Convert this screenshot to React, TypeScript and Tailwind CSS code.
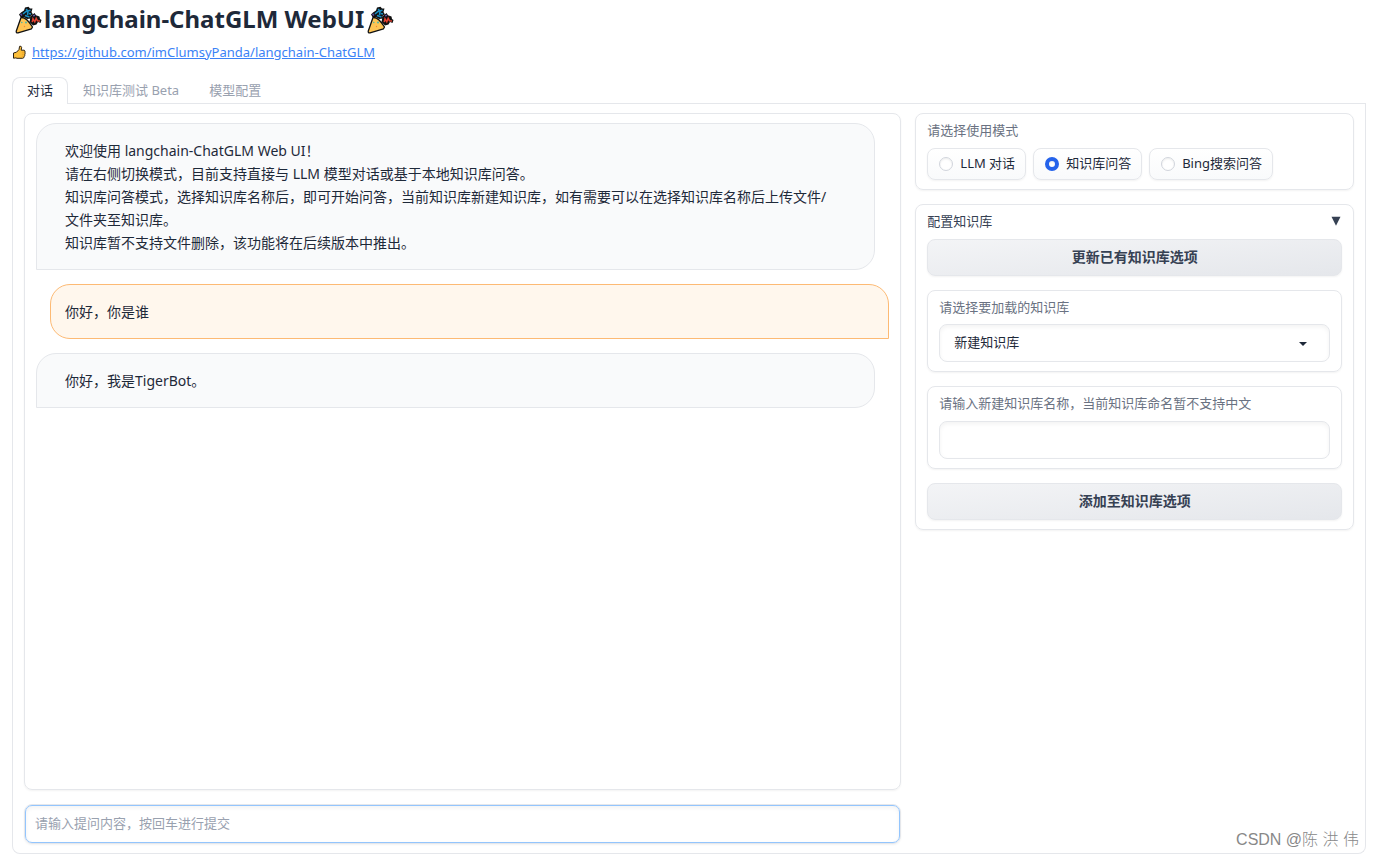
import { useId, useState } from "react";
import type { ReactNode } from "react";

function PartyPopper() {
  return (
    <svg viewBox="0 0 28 28" className="h-7 w-7 shrink-0" aria-hidden="true">
      <path d="M7 6.5 L10 4.5 L11 1.5 L14.5 0.8 L16 2.5 L18.5 2.5 L17.5 6 L19 8.5 L16.5 10 L17 12.5 L13 13 L10 11 L6.500 11 L5 8.5 Z" fill="#111" />
      <path d="M9 8 L12 5.5 L16.5 4.2 M12.3 2.8 L14 6 L13.5 9 M11 9.5 L15.5 11 M15 7.5 L17 8" stroke="#1a8fc4" strokeWidth="1.6" fill="none" />
      <path d="M6.5 7.8 L8 9.5" stroke="#5b4fa0" strokeWidth="1.6" />
      <path d="M16.5 10.5 L20.5 7 L22 9.2 L25.500 10.5 L26 13 L27.5 14 L26.500 17 L24 16 L22.5 18.5 L19 19.5 L15.500 16 Z" fill="#111" />
      <path d="M18.2 16.2 L19 12.8 L20.8 15.8 L22.2 12.3 L23.5 14.8 L26 15" stroke="#e0402f" strokeWidth="1.5" fill="none" />
      <path d="M19.3 10.2 L20.8 9" stroke="#6a5bb5" strokeWidth="1.6" />
      <path d="M7 11.500 Q12.5 11 18.500 21 L17.5 22.8 L4 26.800 Q1.8 27.2 2.3 25 Z" fill="#ffc554" stroke="#111" strokeWidth="1.3" strokeLinejoin="round" />
      <circle cx="12" cy="16.5" r="0.9" fill="#35b6b8" />
      <circle cx="7.8" cy="16.5" r="0.7" fill="#35b6b8" />
      <circle cx="10.5" cy="20.5" r="0.7" fill="#ef8a3d" />
    </svg>
  );
}

function ThumbsUp() {
  return (
    <svg viewBox="0 0 14 14" className="h-3.5 w-3.5 shrink-0" aria-hidden="true">
      <path
        d="M1.5 8 L4.5 7.200 L7 4.500 L7.6 1.3 Q9.3 0.7 9.6 2.3 L9.2 5.2 L12.2 5.2 Q13.5 5.800 12.9 7.1 Q13.5 8.3 12.8 9.2 Q13.1 10.5 12.3 11.3 Q12.3 13 10.6 13.3 L5 13.3 L3.8 12.9 L1.5 13.2 Z"
        fill="#fdbf3a"
        stroke="#2b2113"
        strokeWidth="1"
        strokeLinejoin="round"
      />
      <path d="M9.8 7.2 H12.3 M9.8 9.2 H12.3 M9.8 11.2 H12" stroke="#d98a12" strokeWidth="0.5" />
    </svg>
  );
}

const tabs = ["对话", "知识库测试 Beta", "模型配置"];
const modes = ["LLM 对话", "知识库问答", "Bing搜索问答"];

function BotMessage({ children }: { children: ReactNode }) {
  return (
    <div className="mr-3.5 rounded-[20px] rounded-bl-none border border-gray-200 bg-gray-50 py-[15px] pr-10 pl-7">
      {children}
    </div>
  );
}

function UserMessage({ children }: { children: ReactNode }) {
  return (
    <div className="ml-3.5 rounded-[20px] rounded-br-none border border-[#fdba74] bg-[#fff7ed] px-3.5 py-[15px]">
      {children}
    </div>
  );
}

function SecondaryButton({ children }: { children: ReactNode }) {
  return (
    <button
      type="button"
      className="h-[37px] w-full rounded-lg border border-gray-200 bg-linear-to-br from-gray-100 to-gray-200 pb-0.5 text-sm font-bold text-gray-700 shadow-xs"
    >
      {children}
    </button>
  );
}

export default function App() {
  const [tab, setTab] = useState(0);
  const [mode, setMode] = useState(1);
  const [open, setOpen] = useState(true);
  const id = useId();

  return (
    <div className="relative min-h-[857px] bg-white pr-2 pb-1 pl-3 font-['Noto_Sans','Noto_Sans_CJK_SC',sans-serif] text-[13px] leading-5 text-gray-800">
      <header>
        <h1 className="flex h-10 items-center pl-0.5 text-2xl leading-10 font-bold">
          <PartyPopper />
          <span className="px-0.5 pb-0.5">langchain-ChatGLM WebUI</span>
          <PartyPopper />
        </h1>
        <p className="flex h-6 items-center gap-1.5">
          <ThumbsUp />
          <a href="https://github.com/imClumsyPanda/langchain-ChatGLM" className="text-[#3b82f6] underline">
            https://github.com/imClumsyPanda/langchain-ChatGLM
          </a>
        </p>
      </header>

      <main className="mt-[13px]">
        <div role="tablist" className="flex h-[27px] border-b border-gray-200">
          {tabs.map((name, i) => (
            <button
              key={name}
              type="button"
              role="tab"
              aria-selected={tab === i}
              onClick={() => setTab(i)}
              className={
                tab === i
                  ? "-mb-px rounded-t-lg border border-b-0 border-gray-200 bg-white px-3.5 pb-0.5 text-gray-800"
                  : "border border-b-0 border-transparent px-3.5 pb-0.5 text-gray-400"
              }
            >
              {name}
            </button>
          ))}
        </div>

        <div className="grid grid-cols-[2fr_1fr] gap-3.5 rounded-b-lg border border-t-0 border-gray-200 px-[11px] pt-[9px] pb-[9px]">
          <section className="flex flex-col gap-3.5">
            <div className="flex h-[677px] flex-col gap-3.5 overflow-y-auto rounded-lg border border-gray-200 px-[11px] py-[9px] text-sm leading-[23px] shadow-xs">
              <BotMessage>
                <p>欢迎使用 langchain-ChatGLM Web UI！</p>
                <p>请在右侧切换模式，目前支持直接与 LLM 模型对话或基于本地知识库问答。</p>
                <p>
                  知识库问答模式，选择知识库名称后，即可开始问答，当前知识库新建知识库，如有需要可以在选择知识库名称后上传文件/文件夹至知识库。
                </p>
                <p>知识库暂不支持文件删除，该功能将在后续版本中推出。</p>
              </BotMessage>
              <UserMessage>
                <p>你好，你是谁</p>
              </UserMessage>
              <BotMessage>
                <p>你好，我是TigerBot。</p>
              </BotMessage>
            </div>
            <div className="rounded-lg border border-gray-200 shadow-xs">
              <input
                type="text"
                aria-label="提问内容"
                placeholder="请输入提问内容，按回车进行提交"
                className="block h-[38px] w-full rounded-[7px] border border-[#93c5fd] px-[9px] pb-0.5 shadow-[inset_0_2px_4px_rgba(0,0,0,0.05)] outline-none placeholder:text-gray-400"
              />
            </div>
          </section>

          <section className="flex flex-col gap-3.5">
            <fieldset className="h-[77px] rounded-lg border border-gray-200 px-[11px] pt-1.5 shadow-xs">
              <legend className="float-left mb-2 w-full text-gray-500">请选择使用模式</legend>
              <div className="clear-both flex gap-[7px]">
                {modes.map((name, i) => (
                  <label
                    key={name}
                    className="flex h-8 items-center gap-[7px] rounded-lg border border-gray-200 bg-linear-to-b from-white to-gray-50 pr-2.5 pl-[11px] shadow-xs"
                  >
                    <input
                      type="radio"
                      name={`${id}-mode`}
                      checked={mode === i}
                      onChange={() => setMode(i)}
                      className="h-3.5 w-3.5 appearance-none rounded-full border border-gray-300 bg-white shadow-[inset_0_1px_2px_rgba(0,0,0,0.08)] checked:border-4 checked:border-[#2563eb]"
                    />
                    <span className="pb-0.5">{name}</span>
                  </label>
                ))}
              </div>
            </fieldset>

            <div className="rounded-lg border border-gray-200 px-[11px] pt-1.5 pb-[9px] shadow-xs">
              <button
                type="button"
                aria-expanded={open}
                onClick={() => setOpen(!open)}
                className="mb-2 flex w-full items-center justify-between text-gray-700"
              >
                <span>配置知识库</span>
                <svg viewBox="0 0 10 10" className="mr-px h-2.5 w-2.5 fill-gray-700" aria-hidden="true">
                  <path d="M0.5 0.8 H9.5 L5 9.8 Z" />
                </svg>
              </button>
              {open && (
                <div className="flex flex-col gap-3.5">
                  <SecondaryButton>更新已有知识库选项</SecondaryButton>
                  <div className="rounded-lg border border-gray-200 px-[11px] pt-1.5 pb-[9px] shadow-xs">
                    <label htmlFor={`${id}-kb`} className="mb-[7px] block text-gray-500">
                      请选择要加载的知识库
                    </label>
                    <div className="relative">
                      <select
                        id={`${id}-kb`}
                        className="block h-[38px] w-full appearance-none rounded-lg border border-gray-200 bg-white px-3.5 pb-0.5 shadow-[inset_0_2px_4px_rgba(0,0,0,0.05)]"
                      >
                        <option>新建知识库</option>
                      </select>
                      <svg
                        viewBox="0 0 8 4"
                        className="pointer-events-none absolute top-[18px] right-[23px] h-1 w-2 fill-gray-800"
                        aria-hidden="true"
                      >
                        <path d="M0 0 H8 L4 4 Z" />
                      </svg>
                    </div>
                  </div>
                  <div className="rounded-lg border border-gray-200 px-[11px] pt-1.5 pb-[9px] shadow-xs">
                    <label htmlFor={`${id}-name`} className="mb-2 block text-gray-500">
                      请输入新建知识库名称，当前知识库命名暂不支持中文
                    </label>
                    <input
                      id={`${id}-name`}
                      type="text"
                      className="block h-[38px] w-full rounded-lg border border-gray-200 px-2.5 shadow-[inset_0_2px_4px_rgba(0,0,0,0.05)] outline-none"
                    />
                  </div>
                  <SecondaryButton>添加至知识库选项</SecondaryButton>
                </div>
              )}
            </div>
          </section>
        </div>
      </main>

      <div className="absolute right-[15px] bottom-1.5 font-['Liberation_Sans','Noto_Sans_CJK_SC',sans-serif] text-base leading-6 font-light text-[#888888]">
        CSDN @陈 洪 伟
      </div>
    </div>
  );
}
